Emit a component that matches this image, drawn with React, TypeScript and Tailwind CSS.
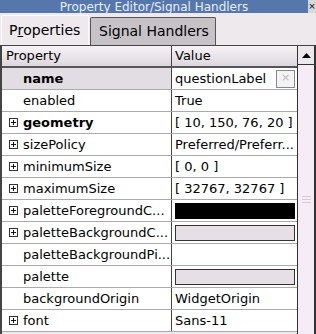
import React from 'react';

type Row = {
  name: string;
  value?: string;
  bold?: boolean;
  expand?: boolean;
  swatch?: 'black' | 'light';
  selected?: boolean;
  clear?: boolean;
};

const rows: Row[] = [
  { name: 'name', value: 'questionLabel', bold: true, selected: true, clear: true },
  { name: 'enabled', value: 'True' },
  { name: 'geometry', value: '[ 10, 150, 76, 20 ]', bold: true, expand: true },
  { name: 'sizePolicy', value: 'Preferred/Preferr...', expand: true },
  { name: 'minimumSize', value: '[ 0, 0 ]', expand: true },
  { name: 'maximumSize', value: '[ 32767, 32767 ]', expand: true },
  { name: 'paletteForegroundC...', swatch: 'black', expand: true },
  { name: 'paletteBackgroundC...', swatch: 'light', expand: true },
  { name: 'paletteBackgroundPi...' },
  { name: 'palette', swatch: 'light' },
  { name: 'backgroundOrigin', value: 'WidgetOrigin' },
  { name: 'font', value: 'Sans-11', expand: true },
];

function PlusBox() {
  return (
    <svg width="9" height="9" viewBox="0 0 9 9" className="shrink-0">
      <rect x="0.5" y="0.5" width="8" height="8" fill="white" stroke="#333" />
      <path d="M2 4.5h5M4.5 2v5" stroke="#111" />
    </svg>
  );
}

export default function App() {
  return (
    <div
      className="w-[316px] h-[334px] overflow-hidden bg-[#ede9ed] text-[13px] text-black"
      style={{ fontFamily: '"DejaVu Sans", sans-serif' }}
    >
      {/* title bar */}
      <div className="flex h-[13px]">
        <div className="flex flex-1 items-center justify-center bg-[#5577ab] text-[12px] leading-none text-[#e8eef8]">
          Property Editor/Signal Handlers
        </div>
        <div className="flex w-[8px] items-center justify-center bg-[#d8d8d8] text-[9px] leading-none">×</div>
      </div>

      {/* tabs */}
      <div className="flex h-[32px] items-end pl-[1px]">
        <div className="flex h-[30px] w-[88px] items-center rounded-t-[2px] border-l border-t border-r border-[#fdfbfd] pl-[7px] text-[14px]">
          P<span className="underline">r</span>operties
        </div>
        <div className="ml-[1px] flex h-[28px] w-[126px] items-center rounded-t-[2px] border border-b-0 border-[#555] bg-[#c6c2c6] pl-[8px] text-[14px]">
          Si<span className="underline">g</span>nal Handlers
        </div>
      </div>

      {/* table */}
      <div className="flex h-[289px] border-l-2 border-t border-[#444]">
        <div className="flex w-[295px] flex-col">
          <div className="flex h-[22px] border-b-2 border-[#555] bg-gradient-to-b from-[#f6f2f6] to-[#ddd8dd]">
            <div className="flex w-[170px] items-center border-r border-[#444] pl-[4px]">Property</div>
            <div className="flex flex-1 items-center pl-[3px]">Value</div>
          </div>
          {rows.map((r) => (
            <div key={r.name} className="flex h-[22px] border-b border-[#aaa]">
              <div
                className={`flex w-[170px] items-center gap-[5px] overflow-hidden whitespace-nowrap border-r border-[#444] pl-[7px] ${
                  r.selected ? 'bg-[#e2dde2]' : 'bg-white'
                } ${r.bold ? 'font-bold' : ''}`}
              >
                {r.expand ? <PlusBox /> : <span className="w-[9px] shrink-0" />}
                <span>{r.name}</span>
              </div>
              <div className="flex flex-1 items-center overflow-hidden whitespace-nowrap bg-white pl-[3px] pr-[2px]">
                {r.swatch === 'black' && <div className="h-[16px] w-full bg-black" />}
                {r.swatch === 'light' && <div className="h-[16px] w-full border border-[#333] bg-[#e6e0e6]" />}
                {r.value && <span className="flex-1">{r.value}</span>}
                {r.clear && (
                  <div className="flex h-[18px] w-[19px] items-center justify-center border border-[#888] bg-[#f4f2f4] text-[11px] text-[#bbb]">
                    ×
                  </div>
                )}
              </div>
            </div>
          ))}
        </div>
        {/* scrollbar */}
        <div className="flex w-[19px] flex-col border-l border-r-2 border-[#333] bg-[#f6ecf6]">
          <div className="flex h-[19px] items-center justify-center border-b border-[#333] bg-[#ece8ec]">
            <svg width="9" height="5" viewBox="0 0 9 5">
              <path d="M0 5L4.5 0L9 5Z" fill="#000" />
            </svg>
          </div>
          <div className="flex flex-1 items-center justify-center">
            <div className="flex flex-col gap-[2px] opacity-60">
              <div className="h-px w-[9px] bg-[#bbb]" />
              <div className="h-px w-[9px] bg-[#bbb]" />
              <div className="h-px w-[9px] bg-[#bbb]" />
            </div>
          </div>
        </div>
      </div>
    </div>
  );
}
